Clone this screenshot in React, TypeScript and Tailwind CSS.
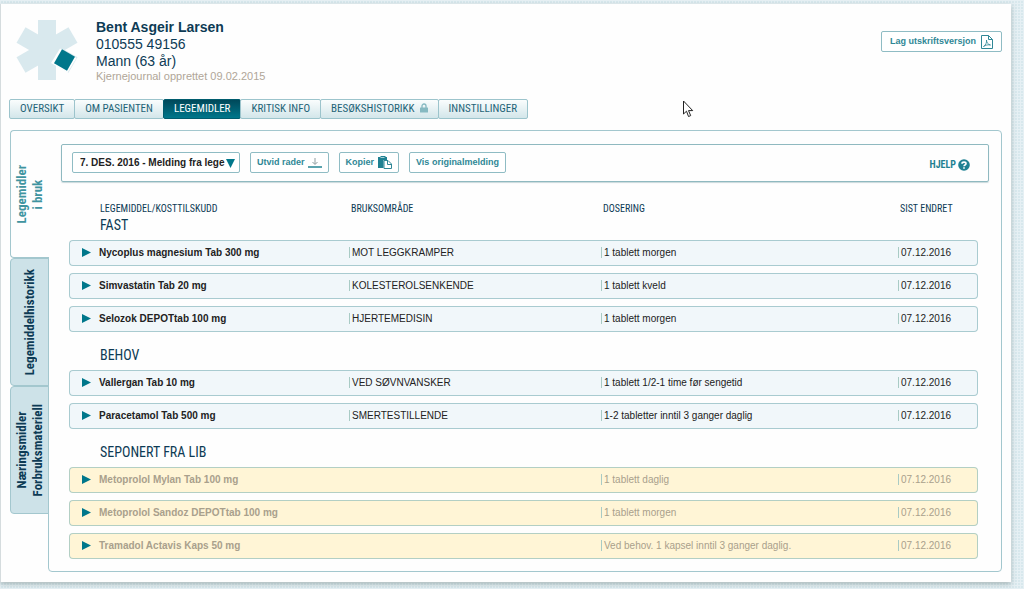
import { useState } from 'react'
import clsx from 'clsx'

type Medication = {
  name: string
  usage: string
  dosage: string
  changed: string
}

type Group = {
  title: string
  discontinued?: boolean
  items: Medication[]
}

const navItems = [
  { label: 'OVERSIKT' },
  { label: 'OM PASIENTEN' },
  { label: 'LEGEMIDLER' },
  { label: 'KRITISK INFO' },
  { label: 'BESØKSHISTORIKK', locked: true },
  { label: 'INNSTILLINGER' },
]

const sideTabs = [
  ['Legemidler', 'i bruk'],
  ['Legemiddelhistorikk'],
  ['Næringsmidler', 'Forbruksmateriell'],
]

const groups: Group[] = [
  {
    title: 'FAST',
    items: [
      { name: 'Nycoplus magnesium Tab 300 mg', usage: 'MOT LEGGKRAMPER', dosage: '1 tablett morgen', changed: '07.12.2016' },
      { name: 'Simvastatin Tab 20 mg', usage: 'KOLESTEROLSENKENDE', dosage: '1 tablett kveld', changed: '07.12.2016' },
      { name: 'Selozok DEPOTtab 100 mg', usage: 'HJERTEMEDISIN', dosage: '1 tablett morgen', changed: '07.12.2016' },
    ],
  },
  {
    title: 'BEHOV',
    items: [
      { name: 'Vallergan Tab 10 mg', usage: 'VED SØVNVANSKER', dosage: '1 tablett 1/2-1 time før sengetid', changed: '07.12.2016' },
      { name: 'Paracetamol Tab 500 mg', usage: 'SMERTESTILLENDE', dosage: '1-2 tabletter inntil 3 ganger daglig', changed: '07.12.2016' },
    ],
  },
  {
    title: 'SEPONERT FRA LIB',
    discontinued: true,
    items: [
      { name: 'Metoprolol Mylan Tab 100 mg', usage: '', dosage: '1 tablett daglig', changed: '07.12.2016' },
      { name: 'Metoprolol Sandoz DEPOTtab 100 mg', usage: '', dosage: '1 tablett morgen', changed: '07.12.2016' },
      { name: 'Tramadol Actavis Kaps 50 mg', usage: '', dosage: 'Ved behov. 1 kapsel inntil 3 ganger daglig.', changed: '07.12.2016' },
    ],
  },
]

const narrow = "font-['Liberation_Sans_Narrow','Roboto_Condensed','Roboto',sans-serif]"

function Logo() {
  return (
    <svg viewBox="0 0 62 62" className="h-[62px] w-[62px] shrink-0" aria-hidden="true">
      <g fill="#d9e9ee">
        <rect x="22" y="1" width="18" height="60" />
        <rect x="22" y="1" width="18" height="60" transform="rotate(60 31 31)" />
        <rect x="22" y="1" width="18" height="60" transform="rotate(120 31 31)" />
      </g>
      <path d="M44 29.500L60.500 39l-9 14.500L35 44z" fill="#fefefe" />
      <rect x="41" y="33" width="15" height="16" fill="#00778b" transform="rotate(30 48.500 41)" />
    </svg>
  )
}

function PdfIcon() {
  return (
    <svg viewBox="0 0 12 14" className="h-[14px] w-3" fill="none" stroke="#2f8796" aria-hidden="true">
      <path d="M.5.5h7l4 4v9H.5z M7.500.5v4h4" />
      <path d="M2.500 11.500c2-1 3.500-4 3-6.500 0 2.500 1.500 4.500 4 5-2.500-.5-5 0-7 1.500z" strokeWidth=".8" />
    </svg>
  )
}

function ExpandIcon() {
  return (
    <svg viewBox="0 0 14 12" className="h-3 w-[14px]" fill="none" aria-hidden="true">
      <path d="M7 1v6M4.500 5L7 7.500 9.500 5" stroke="#8f9da0" />
      <path d="M0 10h14" stroke="#5ba3ae" strokeWidth="2" />
    </svg>
  )
}

function CopyIcon() {
  return (
    <svg viewBox="0 0 14 13" className="h-[13px] w-[14px]" aria-hidden="true">
      <path d="M0 1h2.500V0h5v1H9v3H5.500v8H0z" fill="#1f8192" />
      <path d="M2.500 1.500h4" stroke="#a9d0d6" />
      <path d="M6 4.500h4l3.500 3.500v4.500H6z" fill="#fff" stroke="#2f8796" />
      <path d="M9.500 4.500v4h4" fill="none" stroke="#2f8796" />
    </svg>
  )
}

function LockIcon() {
  return (
    <svg viewBox="0 0 8 10" className="mb-1 h-[10px] w-2" aria-hidden="true">
      <path d="M2 5V3a2 2 0 0 1 4 0v2" fill="none" stroke="#86b9c1" strokeWidth="1.300" />
      <rect y="4.500" width="8" height="5" rx=".5" fill="#86b9c1" />
    </svg>
  )
}

function HelpIcon() {
  return (
    <svg viewBox="0 0 12 12" className="h-3 w-3" aria-hidden="true">
      <circle cx="6" cy="6" r="5.800" fill="#1f8192" />
      <path d="M4 4.700C4 2.600 8 2.600 8 4.700 8 6 6 6 6 7.300M6 8.200v1.500" fill="none" stroke="#fff" strokeWidth="1.600" />
    </svg>
  )
}

function Arrow() {
  return (
    <svg viewBox="0 0 9 9" className="h-[9px] w-[9px]" aria-hidden="true">
      <path d="M0 0l9 4.500L0 9z" fill="#00778b" />
    </svg>
  )
}

const buttonStyle =
  'flex h-[21px] items-center rounded-xs border border-[#8fbcc4] bg-white text-[9px] font-bold text-[#2f8796]'

function MedicationRow({ item, discontinued }: { item: Medication; discontinued?: boolean }) {
  const cell = clsx(
    'flex h-[26px] items-center border-y pb-[2px]',
    discontinued ? 'border-[#b3cfc4] bg-[#fff5d6] text-[#a9a08c]' : 'border-[#a9cbd0] bg-[#f1f7fa] text-[#222]',
  )
  const divider = <span className="mr-[2px] h-[11px] w-px bg-[#a9cbc5]" />

  return (
    <tr>
      <td className="p-0 pb-[7px]">
        <div className={clsx(cell, 'rounded-l border-l pl-3')}>
          <button className="flex items-center gap-2 font-bold">
            <Arrow />
            {item.name}
          </button>
        </div>
      </td>
      <td className="p-0 pb-[7px]">
        <div className={cell}>
          {item.usage && divider}
          {item.usage}
        </div>
      </td>
      <td className="p-0 pb-[7px]">
        <div className={cell}>
          {divider}
          {item.dosage}
        </div>
      </td>
      <td className="p-0 pb-[7px]">
        <div className={clsx(cell, 'rounded-r border-r')}>
          {divider}
          {item.changed}
        </div>
      </td>
    </tr>
  )
}

export default function App() {
  const [activeNav, setActiveNav] = useState('LEGEMIDLER')
  const [activeTab, setActiveTab] = useState(0)

  return (
    <div className="min-h-screen bg-[#d8e8ed] bg-[linear-gradient(#e6f0f4_1px,transparent_1px),linear-gradient(90deg,#e6f0f4_1px,transparent_1px)] bg-[size:3px_3px] pt-1 pr-[13px] pb-[6px] font-['Liberation_Sans',Arial,sans-serif]">
      <div className="border-l border-[#d5dcde] bg-[#fefefe] px-[9px] pb-[10px] shadow-[0_2px_5px_rgba(90,110,110,0.45)]">
        {/* Patient header */}
        <header className="flex items-start pt-[15px] pl-[6px]">
          <Logo />
          <div className="ml-[18px] text-[14px] leading-[17px] text-[#0d3b55]">
            <h1 className="font-bold">Bent Asgeir Larsen</h1>
            <p>010555 49156</p>
            <p>Mann (63 år)</p>
            <p className="text-[11px] leading-[12px] text-[#b0a698]">Kjernejournal opprettet 09.02.2015</p>
          </div>
          <button className={clsx(buttonStyle, 'mt-3 ml-auto gap-[5px] px-2')}>
            Lag utskriftsversjon
            <PdfIcon />
          </button>
        </header>

        {/* Main navigation */}
        <nav className={clsx('mt-[17px] flex text-[11px]', narrow)}>
          {navItems.map((item) => (
            <button
              key={item.label}
              onClick={() => setActiveNav(item.label)}
              className={clsx(
                '-ml-px flex h-5 items-center gap-[5px] rounded-xs border px-[10px] pt-px',
                activeNav === item.label
                  ? 'border-[#005c6e] bg-linear-to-b from-[#00485a] to-[#00778b] text-white'
                  : 'border-[#9cc4cc] bg-linear-to-b from-[#fafdfd] to-[#d3e6ea] text-[#1f6478]',
              )}
            >
              {item.label}
              {item.locked && <LockIcon />}
            </button>
          ))}
        </nav>

        <div className="mt-[11px] flex items-stretch">
          {/* Side tabs */}
          <div role="tablist" className={clsx('z-10 -mr-px flex w-[39px] shrink-0 flex-col text-[13px] leading-[16px] font-bold', narrow)}>
            {sideTabs.map((lines, i) => (
              <button
                key={lines[0]}
                role="tab"
                aria-selected={activeTab === i}
                onClick={() => setActiveTab(i)}
                className={clsx(
                  'flex h-32 items-center justify-center rounded-l border border-[#a3c7ce]',
                  activeTab === i ? 'border-r-0 bg-[#fefefe] text-[#3f94a0]' : 'bg-[#cde2e8] text-[#0d3b55]',
                )}
              >
                <span className="rotate-180 text-center [writing-mode:vertical-rl]">
                  {lines.map((line) => (
                    <span key={line} className="block">{line}</span>
                  ))}
                </span>
              </button>
            ))}
          </div>

          <main className="min-w-0 flex-1 rounded-r rounded-bl border border-[#a3c7ce] pt-[13px] pb-[5px]">
            {/* Toolbar */}
            <div className="mx-3 flex h-[38px] items-center gap-[10px] rounded-xs border border-[#8fb9c0] px-[10px] pb-px shadow-[0_1px_1px_rgba(80,130,140,0.3)]">
              <div className="relative flex">
                <select
                  aria-label="Melding"
                  className="h-[21px] w-[168px] appearance-none rounded-xs border border-[#8fbcc4] bg-white pl-[7px] text-[10px] font-bold text-[#222]"
                >
                  <option>7. DES. 2016 - Melding fra lege</option>
                </select>
                <svg viewBox="0 0 9 9" className="pointer-events-none absolute top-[7px] right-[5px] h-[9px] w-[9px]" aria-hidden="true">
                  <path d="M0 0h9L4.500 9z" fill="#00778b" />
                </svg>
              </div>
              <button className={clsx(buttonStyle, 'gap-[3px] px-[6px]')}>
                Utvid rader
                <ExpandIcon />
              </button>
              <button className={clsx(buttonStyle, 'gap-1 px-[6px]')}>
                Kopier
                <CopyIcon />
              </button>
              <button className={clsx(buttonStyle, 'px-[6px]')}>Vis originalmelding</button>
              <a href="#hjelp" className={clsx('mt-1 mr-2 ml-auto flex items-center gap-[2px] text-[10px] font-bold text-[#1f8192]', narrow)}>
                HJELP
                <HelpIcon />
              </a>
            </div>

            {/* Medication list */}
            <div className="mt-[19px] mr-[23px] ml-5">
              <table className="w-full table-fixed border-separate border-spacing-0 text-left text-[10px] whitespace-nowrap">
                <colgroup>
                  <col className="w-[280px]" />
                  <col className="w-[252px]" />
                  <col />
                  <col className="w-[80px]" />
                </colgroup>
                <thead className={clsx('text-[10px] leading-[16px] text-[#0d3b55]', narrow)}>
                  <tr>
                    <th className="p-0 pl-[31px] font-normal">LEGEMIDDEL/KOSTTILSKUDD</th>
                    <th className="p-0 pl-[2px] font-normal">BRUKSOMRÅDE</th>
                    <th className="p-0 pl-[2px] font-normal">DOSERING</th>
                    <th className="p-0 pl-[2px] font-normal">SIST ENDRET</th>
                  </tr>
                </thead>
                {groups.map((group, i) => (
                  <tbody key={group.title}>
                    <tr>
                      <th
                        colSpan={4}
                        className={clsx(
                          'p-0 pb-[7px] pl-[31px] text-[14px] leading-[16px] font-normal text-[#0d3b55]',
                          i > 0 && 'pt-2',
                          narrow,
                        )}
                      >
                        {group.title}
                      </th>
                    </tr>
                    {group.items.map((item) => (
                      <MedicationRow key={item.name} item={item} discontinued={group.discontinued} />
                    ))}
                  </tbody>
                ))}
              </table>
            </div>
          </main>
        </div>
      </div>

      {/* Pointer */}
      <svg viewBox="0 0 11 18" className="pointer-events-none absolute top-[100px] left-[683px] h-[18px] w-[11px]" aria-hidden="true">
        <path d="M.5 1v13l3-2.800 2 5.300 2.200-.9-2.200-5h4.200z" fill="#fff" stroke="#222" />
      </svg>
    </div>
  )
}
